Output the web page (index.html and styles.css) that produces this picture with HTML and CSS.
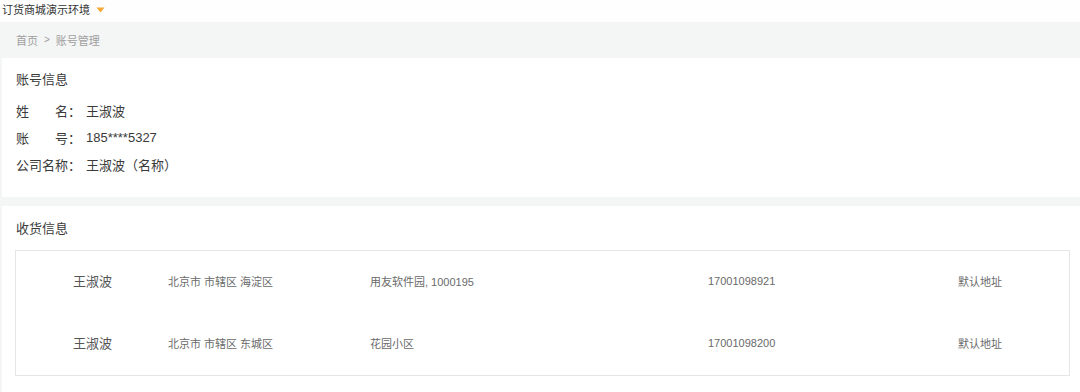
FILE: index.html
```html
<!DOCTYPE html>
<html lang="zh-CN">
<head>
<meta charset="utf-8">
<title>账号管理</title>
<link rel="stylesheet" href="styles.css">
</head>
<body>
<header class="topbar">
  <span class="env">订货商城演示环境</span>
  <svg class="caret" width="9" height="6" viewBox="0 0 9 6"><path d="M0.5 0.5 L8.5 0.5 L4.5 5.5 Z" fill="#f3a735"/></svg>
</header>
<main class="main">
  <nav class="crumb"><span>首页</span><span class="sep">&gt;</span><span>账号管理</span></nav>
  <section class="card card-account">
    <h2 class="card-title">账号信息</h2>
    <div class="info-row"><span class="label">姓名</span><span class="colon">：</span><span class="value">王淑波</span></div>
    <div class="info-row"><span class="label">账号</span><span class="colon">：</span><span class="value">185****5327</span></div>
    <div class="info-row"><span class="label">公司名称</span><span class="colon">：</span><span class="value">王淑波（名称）</span></div>
  </section>
  <section class="card card-address">
    <h2 class="card-title">收货信息</h2>
    <div class="addr-box">
      <div class="addr-row">
        <span class="a-name">王淑波</span>
        <span class="a-region">北京市 市辖区 海淀区</span>
        <span class="a-detail">用友软件园, 1000195</span>
        <span class="a-phone">17001098921</span>
        <span class="a-default">默认地址</span>
      </div>
      <div class="addr-row">
        <span class="a-name">王淑波</span>
        <span class="a-region">北京市 市辖区 东城区</span>
        <span class="a-detail">花园小区</span>
        <span class="a-phone">17001098200</span>
        <span class="a-default">默认地址</span>
      </div>
    </div>
  </section>
</main>
</body>
</html>
```

FILE: styles.css
```css
* { box-sizing: border-box; margin: 0; padding: 0; }
html, body { width: 1080px; height: 392px; overflow: hidden; }
body {
  font-family: "Liberation Sans", "Noto Sans CJK SC", sans-serif;
  color: #333;
  background: #fff;
}
.topbar {
  height: 22px;
  padding-left: 2px;
  display: flex;
  align-items: center;
  gap: 6px;
  font-size: 11px;
  color: #333;
  background: #fdfefd;
  padding-bottom: 4px;
}
.caret { display: block; margin-top: 1px; }
.main {
  background: #f4f5f5;
  padding-left: 2px;
  height: 370px;
}
.crumb {
  height: 36px;
  display: flex;
  align-items: center;
  gap: 6px;
  padding-left: 14px;
  padding-bottom: 1px;
  font-size: 11px;
  color: #a0a0a0;
}
.crumb .sep { font-size: 10px; }
.card {
  background: #fff;
  padding: 12px 14px 0;
}
.card-title {
  font-size: 13px;
  font-weight: normal;
  line-height: 20px;
  color: #3a3a3a;
}
.card-account {
  padding-bottom: 19px;
  margin-bottom: 9px;
}
.card-account .card-title { margin-bottom: 7px; }
.info-row {
  display: flex;
  align-items: center;
  height: 27px;
  font-size: 13px;
  color: #3a3a3a;
}
.label {
  width: 52px;
  text-align: justify;
  text-align-last: justify;
}
.colon { width: 18px; }
.card-address {
  padding-top: 13px;
  height: 200px;
}
.card-address .card-title { margin-bottom: 11px; }
.addr-box {
  width: 1055px;
  border: 1px solid #e6e6e6;
  margin-left: -1px;
}
.addr-row {
  display: grid;
  grid-template-columns: 95px 202px 338px 250px 1fr;
  align-items: center;
  height: 62px;
  padding-left: 57px;
  padding-bottom: 3px;
  font-size: 11px;
  color: #6a6a6a;
}
.a-name { font-size: 13px; color: #555; }
```
